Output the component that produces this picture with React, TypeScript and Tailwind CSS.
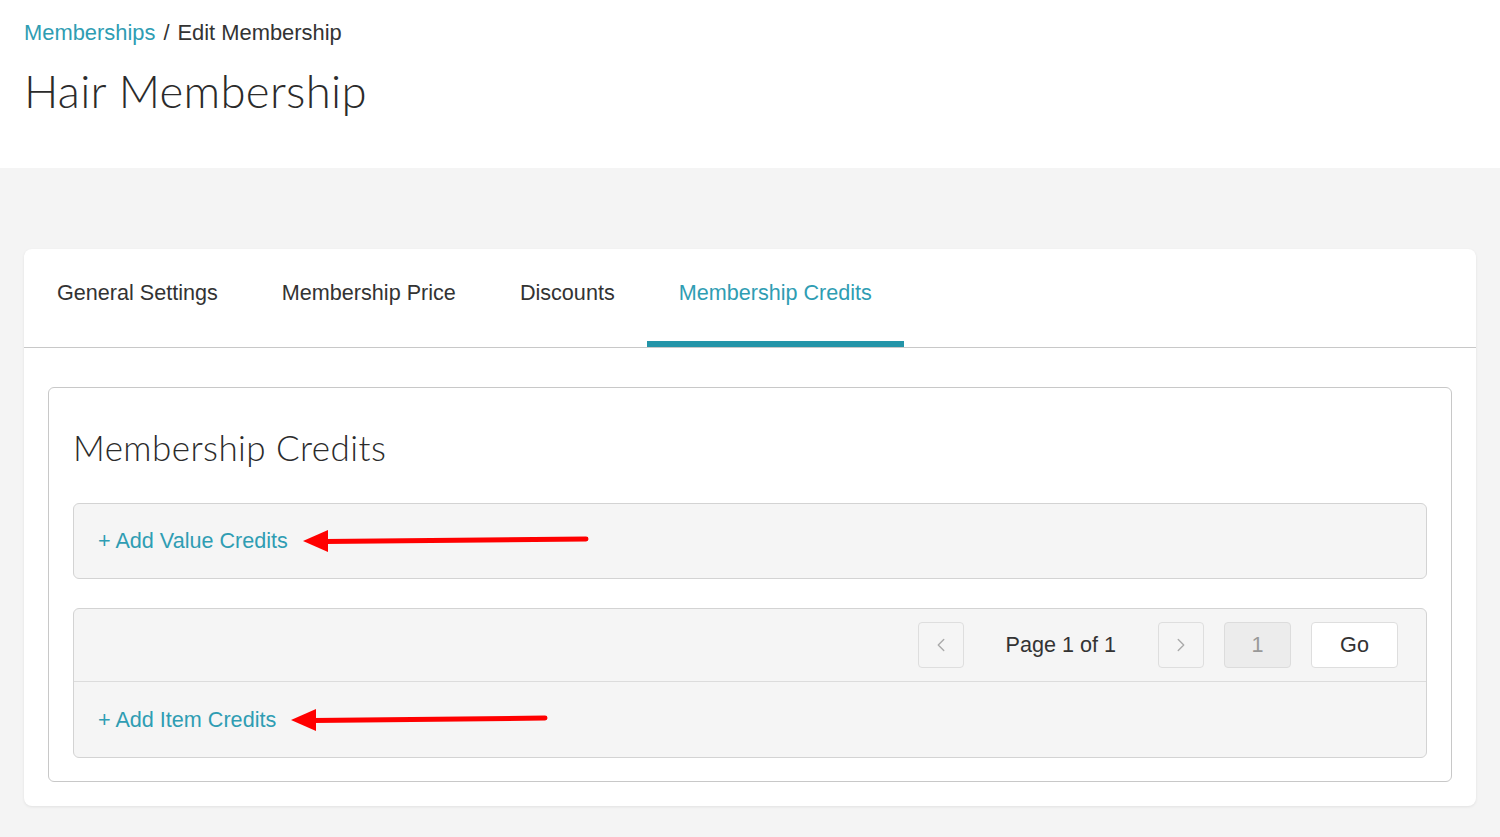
import React from 'react'
import { ChevronLeft, ChevronRight } from 'lucide-react'

const tabs = ['General Settings', 'Membership Price', 'Discounts', 'Membership Credits']

function RedArrow({ length }: { length: number }) {
  return (
    <svg width={length} height={26} viewBox={`0 0 ${length} 26`} className="ml-[15px] shrink-0">
      <polygon points="0,13 25,2 25,24" fill="#ff0000" />
      <line x1={22} y1={13.5} x2={length - 4} y2={11} stroke="#ff0000" strokeWidth={5} strokeLinecap="round" />
    </svg>
  )
}

export default function App() {
  const active = 'Membership Credits'

  return (
    <div className="min-h-screen bg-[#f4f4f4] font-['Liberation_Sans',Arial,sans-serif] text-[#333]">
      {/* Header */}
      <header className="h-[168px] bg-white px-6 pt-5">
        <nav className="flex items-center text-[21.9px] leading-[26px]">
          <a className="text-[#2f9db3]">Memberships</a>
          <span className="mx-[8px] text-[#333]">/</span>
          <span>Edit Membership</span>
        </nav>
        <h1 className="mt-[22px] font-['Lato',sans-serif] text-[45.5px] leading-none font-light tracking-[0.3px] text-[#2b2b2b]">
          Hair Membership
        </h1>
      </header>

      <main className="px-6 pt-[81px] pb-8">
        <div className="rounded-lg bg-white shadow-[0_1px_3px_rgba(0,0,0,0.08)]">
          {/* Tabs */}
          <div className="flex h-[99px] border-b border-[#c8c8c8] pl-px">
            {tabs.map((t) => (
              <div key={t} className="flex flex-col justify-between px-8">
                <span
                  className={`pt-[31px] text-[21.6px] leading-[26px] ${
                    t === active ? 'text-[#2f9db3]' : 'text-[#333]'
                  }`}
                >
                  {t}
                </span>
                <span className={`-mx-8 h-[6px] ${t === active ? 'bg-[#2394a8]' : ''}`} />
              </div>
            ))}
          </div>

          <div className="px-6 pt-[39px] pb-6">
            <div className="rounded-md border border-[#c8c8c8] px-6 pt-[42px] pb-[23px]">
              <h2 className="font-['Lato',sans-serif] text-[35px] leading-none font-light tracking-[0.45px] text-[#2b2b2b]">
                Membership Credits
              </h2>

              {/* Value credits */}
              <div className="mt-[38px] flex h-[76px] items-center rounded-md border border-[#d3d3d3] bg-[#f5f5f5] px-6">
                <a className="text-[21.6px] leading-[26px] text-[#2f9db3]">+ Add Value Credits</a>
                <RedArrow length={287} />
              </div>

              {/* Item credits */}
              <div className="mt-[29px] rounded-md border border-[#d3d3d3] bg-[#f5f5f5]">
                <div className="flex h-[73px] items-center justify-end border-b border-[#dcdcdc] pr-[28px]">
                  <button className="flex h-[46px] w-[46px] items-center justify-center rounded border border-[#dedede] bg-[#f5f5f5] text-[#aaa]">
                    <ChevronLeft size={22} strokeWidth={1.5} />
                  </button>
                  <span className="mx-[42px] text-[21.6px] leading-[26px] text-[#333]">Page 1 of 1</span>
                  <button className="flex h-[46px] w-[46px] items-center justify-center rounded border border-[#dedede] bg-[#f5f5f5] text-[#aaa]">
                    <ChevronRight size={22} strokeWidth={1.5} />
                  </button>
                  <div className="ml-5 flex h-[46px] w-[67px] items-center justify-center rounded border border-[#dcdcdc] bg-[#ececec] text-[21.6px] text-[#999]">
                    1
                  </div>
                  <button className="ml-5 h-[46px] w-[87px] rounded border border-[#dedede] bg-white text-[21.6px] text-[#333]">
                    Go
                  </button>
                </div>
                <div className="flex h-[75px] items-center px-6">
                  <a className="text-[21.6px] leading-[26px] text-[#2f9db3]">+ Add Item Credits</a>
                  <RedArrow length={258} />
                </div>
              </div>
            </div>
          </div>
        </div>
      </main>
    </div>
  )
}
